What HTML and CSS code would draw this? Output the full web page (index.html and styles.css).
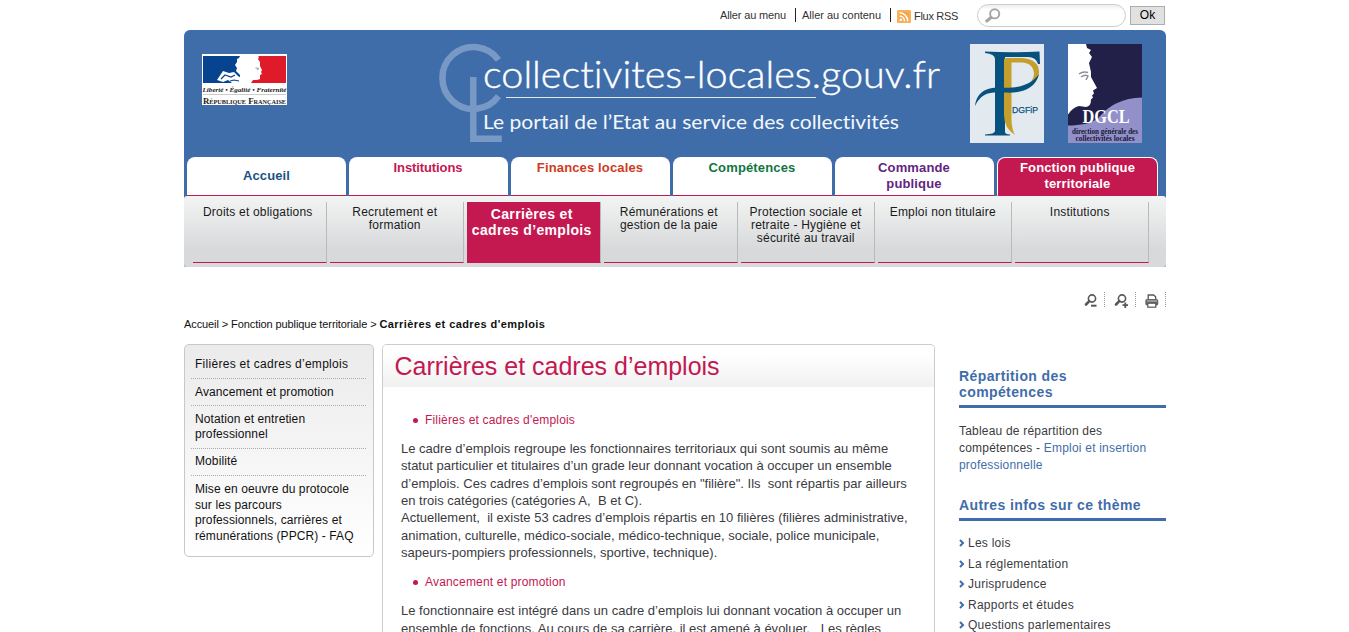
FILE: index.html
```html
<!DOCTYPE html>
<html lang="fr">
<head>
<meta charset="utf-8">
<title>Carrières et cadres d’emplois</title>
<link rel="stylesheet" href="styles.css">
</head>
<body>
<div class="page">
  <div class="topbar">
    <a class="skip">Aller au menu</a>
    <a class="skip second">Aller au contenu</a>
    <a class="rss"><svg width="14" height="13" viewBox="0 0 14 13"><rect width="14" height="13" rx="1.5" fill="#f6a545"/><rect x="1" y="1" width="12" height="11" rx="1" fill="none" stroke="#fac783" stroke-width=".7"/><circle cx="3.8" cy="9.8" r="1.3" fill="#fff"/><path d="M2.5 6a5.2 5.2 0 0 1 5 5.2M2.5 2.8a8.3 8.3 0 0 1 8.2 8.4" fill="none" stroke="#fff" stroke-width="1.6"/></svg><span>Flux RSS</span></a>
    <div class="search"><svg width="16" height="16" viewBox="0 0 16 16"><circle cx="9.700" cy="5.800" r="4.600" fill="none" stroke="#a5a5a5" stroke-width="1.900"/><path d="M6 9.500l-4.200 3.500" stroke="#a5a5a5" stroke-width="3" stroke-linecap="round"/></svg></div>
    <button class="ok">Ok</button>
  </div>

  <header class="header">
    <svg class="banner" width="982" height="127" viewBox="0 0 982 127">
      <g>
        <rect x="18" y="24" width="85" height="51" fill="#fff"/>
        <path d="M19 26h37l-1 2-2 1 0 3-2 3 2 3-1 3 4 4 0 4-3 4H19z" fill="#07448f"/>
        <path d="M74 26h28v27H67l2-3 4 0 3-1 0-4 2-1-1-2 1-2-2-4 0-4-2-3 1-2z" fill="#e01b29"/>
        <path d="M33 50l6-9 6 2 5-1 4 4 5 3 2 4H48l-4-3-5 2z" fill="#fff"/>
        <path d="M37 49l4-4 6 2 4-2M46 51l4-1 5 1" stroke="#07448f" stroke-width="1.200" fill="none"/>
        <path d="M71.500 38l3 .3-1.200 2" stroke="#8d959b" stroke-width="1" fill="none"/>
        <text x="18.500" y="62" textLength="84" lengthAdjust="spacingAndGlyphs" class="devise">Liberté • Égalité • Fraternité</text>
        <path d="M19 64.500h83" stroke="#999" stroke-width=".5"/>
        <text x="19" y="73.500" textLength="83" lengthAdjust="spacingAndGlyphs" class="republique">République Française</text>
      </g>
      <g fill="none" stroke="#7899c5" stroke-width="6.500">
        <path d="M314.500 29.800A31 31 0 1 0 314.500 66.200"/>
        <path d="M289.300 47v61.800h28.500"/>
      </g>
      <text x="299" y="58" textLength="457" lengthAdjust="spacingAndGlyphs" class="site">collectivites-locales.gouv.fr</text>
      <path d="M322 67.500h310" stroke="#dfe8f2"/>
      <text x="299" y="99" textLength="416" lengthAdjust="spacingAndGlyphs" class="tagline">Le portail de l’Etat au service des collectivités</text>
      <g>
        <rect x="786" y="14" width="74" height="99" fill="#e2eaf0"/>
        <path d="M801 21.500Q828 23 855.500 21.500L856 34h-2Q852 27 844 27H821v75q0 2 5 2.500v1h-25v-1q10-.5 10-3.500V29q0-5-10-6z" fill="#07517f"/>
        <path d="M820 30q0-2 3-2h15c12 1 17 6 17 14 0 9-8 15-19 18 9-5 14-10 14-17-1-8-6-10.500-14-10.500h-8.500V85q-.5 13 3.500 20-11-7-11-20z" fill="#c59e2b"/>
        <path d="M791 76C793 62 802 57.500 815 57.500 833 58.500 846 56 855 44 851 60 836 63.500 820 62.500 804 61.500 797 64 791 76z" fill="#07517f"/>
        <text x="828" y="83" textLength="26" lengthAdjust="spacingAndGlyphs" class="dgfip">DGFiP</text>
      </g>
      <g>
        <rect x="884" y="14" width="74" height="99" fill="#221f49"/>
        <path d="M884 95.500c13 0 22-2 30-7 5-6 10-11 18-15q12-6 26-6v45.500h-74z" fill="#9190c8"/>
        <path d="M884 14h18l1 4 4 2-2 3 3 4-3 6 2 9 0 5 6 11-4 2.500 1 3-2 2 1 2-2 2q0 7-5 7.500l-7-1q-6 1-11 8.500z" fill="#fff"/>
        <path d="M895 44q4-3 9-1.500M897 47q4-3 7-1l-2 4" fill="none" stroke="#8d8f9c" stroke-width="1.500"/>
        <text x="898.500" y="92.500" textLength="47" lengthAdjust="spacingAndGlyphs" class="dgcl">DGCL</text>
        <text x="888" y="104" textLength="66" lengthAdjust="spacingAndGlyphs" class="direction">direction générale des</text>
        <text x="891.500" y="110.800" textLength="59" lengthAdjust="spacingAndGlyphs" class="direction">collectivités locales</text>
      </g>
    </svg>
    <nav class="tabs">
      <a class="tab home">Accueil</a>
      <a class="tab inst">Institutions</a>
      <a class="tab fin">Finances locales</a>
      <a class="tab comp">Compétences</a>
      <a class="tab cmd">Commande<br>publique</a>
      <a class="tab active">Fonction publique<br>territoriale</a>
    </nav>
    <nav class="subnav">
      <a class="sub">Droits et obligations</a>
      <a class="sub">Recrutement et<br>formation</a>
      <a class="sub current">Carrières et<br>cadres d’emplois</a>
      <a class="sub">Rémunérations et<br>gestion de la paie</a>
      <a class="sub">Protection sociale et<br>retraite - Hygiène et<br>sécurité au travail</a>
      <a class="sub">Emploi non titulaire</a>
      <a class="sub">Institutions</a>
    </nav>
  </header>

  <div class="tools">
    <span class="tool minus"><svg width="14" height="14" viewBox="0 0 14 14"><circle cx="8" cy="4.500" r="3.600" fill="none" stroke="#55585b" stroke-width="1.600"/><path d="M5.300 7.200L2 10.500" stroke="#55585b" stroke-width="2.600" stroke-linecap="round"/><path d="M7 11.700h5.500" stroke="#55585b" stroke-width="2"/></svg></span>
    <span class="tool plus"><svg width="15" height="14" viewBox="0 0 15 14"><circle cx="8" cy="4.500" r="3.600" fill="none" stroke="#55585b" stroke-width="1.600"/><path d="M5.300 7.200L2 10.500" stroke="#55585b" stroke-width="2.600" stroke-linecap="round"/><path d="M8.500 11.200h5.500M11.300 8.500v5.500" stroke="#55585b" stroke-width="1.800"/></svg></span>
    <span class="tool print"><svg width="14" height="14" viewBox="0 0 14 14"><path d="M3.200 5V1h5.500l2 2v2" fill="#fff" stroke="#55585b" stroke-width="1.300"/><rect x=".3" y="5" width="13" height="6.500" rx="1.800" fill="#66696c"/><path d="M2 7h10" stroke="#c4c4c4"/><rect x="2.800" y="9.200" width="8" height="4" fill="#fff" stroke="#55585b" stroke-width="1.200"/></svg></span>
  </div>

  <div class="crumbs">Accueil &gt; Fonction publique territoriale &gt; <b>Carrières et cadres d'emplois</b></div>

  <div class="columns">
    <ul class="side">
      <li class="first">Filières et cadres d’emplois</li>
      <li>Avancement et promotion</li>
      <li>Notation et entretien<br>professionnel</li>
      <li>Mobilité</li>
      <li>Mise en oeuvre du protocole<br>sur les parcours<br>professionnels, carrières et<br>rémunérations (PPCR) - FAQ</li>
    </ul>
    <main class="main">
      <h1>Carrières et cadres d’emplois</h1>
      <div class="article">
        <h2>Filières et cadres d'emplois</h2>
        <p>Le cadre d’emplois regroupe les fonctionnaires territoriaux qui sont soumis au même<br>statut particulier et titulaires d’un grade leur donnant vocation à occuper un ensemble<br>d’emplois. Ces cadres d’emplois sont regroupés en "filière". Ils&nbsp; sont répartis par ailleurs<br>en trois catégories (catégories A,&nbsp; B et C).<br>Actuellement,&nbsp; il existe 53 cadres d’emplois répartis en 10 filières (filières administrative,<br>animation, culturelle, médico-sociale, médico-technique, sociale, police municipale,<br>sapeurs-pompiers professionnels, sportive, technique).</p>
        <h2>Avancement et promotion</h2>
        <p>Le fonctionnaire est intégré dans un cadre d’emplois lui donnant vocation à occuper un<br>ensemble de fonctions. Au cours de sa carrière, il est amené à évoluer.&nbsp; &nbsp;Les règles</p>
      </div>
    </main>
    <aside class="aside">
      <h3>Répartition des<br>compétences</h3>
      <p>Tableau de répartition des<br>compétences - <a>Emploi et insertion<br>professionnelle</a></p>
      <h3>Autres infos sur ce thème</h3>
      <ul class="links">
        <li><svg width="6" height="8" viewBox="0 0 6 8"><path d="M1 1l3 3-3 3"/></svg>Les lois</li>
        <li><svg width="6" height="8" viewBox="0 0 6 8"><path d="M1 1l3 3-3 3"/></svg>La réglementation</li>
        <li><svg width="6" height="8" viewBox="0 0 6 8"><path d="M1 1l3 3-3 3"/></svg>Jurisprudence</li>
        <li><svg width="6" height="8" viewBox="0 0 6 8"><path d="M1 1l3 3-3 3"/></svg>Rapports et études</li>
        <li><svg width="6" height="8" viewBox="0 0 6 8"><path d="M1 1l3 3-3 3"/></svg>Questions parlementaires</li>
      </ul>
    </aside>
  </div>
</div>
</body>
</html>
```
FILE: styles.css
```css
* { box-sizing: border-box; }
html { height: 100%; overflow: hidden; }
body { margin: 0; height: 632px; overflow: hidden; background: #fff; font-family: "Liberation Sans", Arial, sans-serif; font-size: 12px; color: #222; }
.page { width: 982px; margin-left: 184px; }
ul { list-style: none; margin: 0; padding: 0; }
svg { display: block; flex: none; }

.topbar { height: 30px; display: flex; justify-content: flex-end; align-items: flex-start; padding-right: 1px; font-size: 11px; letter-spacing: -.15px; color: #333; white-space: nowrap; }
.skip { margin-top: 8px; height: 14px; line-height: 14px; width: 76px; border-right: 1px solid #222; }
.skip.second { margin-left: 6px; width: 89px; letter-spacing: -.03px; }
.rss { display: flex; align-items: center; gap: 3px; margin: 9px 0 0 6px; width: 80px; height: 14px; letter-spacing: -.3px; }
.search { width: 149px; height: 23px; margin-top: 4px; border: 1px solid #ccc; border-radius: 12px; padding: 3px 7px; background: linear-gradient(#eee, #fff 25%); }
.ok { width: 35px; height: 19px; margin: 6px 0 0 4px; padding: 0; border: 1px solid #adadad; background: #e1e1e1; font: 12px/15px "Liberation Sans", Arial, sans-serif; color: #000; }

.header { height: 237px; background: #3f6daa; border-radius: 6px 6px 2px 2px; }
.devise { font: italic bold 7px "Liberation Serif", serif; fill: #222; }
.republique { font: bold 8.500px "Liberation Serif", serif; font-variant: small-caps; fill: #222; }
.site { font: 300 38px Lato, sans-serif; font-variant-ligatures: none; fill: #fff; stroke: #fff; stroke-width: .4px; }
.tagline { font: 400 20px Lato, sans-serif; font-variant-ligatures: none; fill: #f3f7fb; }
.dgfip { font: 9.500px "Liberation Sans", sans-serif; fill: #07517f; stroke: #07517f; stroke-width: .25px; }
.dgcl { font: bold 19px "Liberation Serif", serif; fill: #fff; }
.direction { font: bold 7.500px "Liberation Serif", serif; fill: #1a1838; }

.tabs { display: flex; gap: 3px; padding-left: 3px; height: 39px; }
.tab { width: 159px; height: 39px; background: #fff; border-bottom: 1px solid #c31850; border-radius: 8px 8px 0 0; text-align: center; padding-top: 3px; font: bold 13px/16px "Liberation Sans", Arial, sans-serif; letter-spacing: .14px; }
.home { color: #1b5284; padding-top: 11px; }
.inst { color: #c31850; letter-spacing: -.1px; padding-right: 1px; }
.fin { color: #d03a22; padding-right: 1px; }
.comp { color: #11753f; padding-right: 1px; }
.cmd { color: #632481; padding-right: 1px; }
.active { width: 161px; color: #fff; background: #c31850; border: 1px solid #fff; border-bottom-color: #c31850; padding-top: 2px; }

.subnav { height: 71px; display: flex; gap: 3px; padding: 6px 0 4px 9px; background: linear-gradient(#f3f5f4, #d8d9db 75%); border-radius: 3px; }
.sub { width: 134px; height: 61px; border-right: 1px solid #b9babc; border-bottom: 1px solid #c31850; text-align: center; padding: 4px 3.500px 0 0; line-height: 13px; color: #1a1a1a; letter-spacing: .2px; white-space: nowrap; }
.sub.current { background: #c31850; color: #fff; font: bold 14px/16px "Liberation Sans", Arial, sans-serif; letter-spacing: .35px; }

.tools { height: 31px; margin-top: 10px; display: flex; justify-content: flex-end; align-items: flex-end; }
.tool { height: 15px; display: flex; align-items: flex-start; border-right: 1px dotted #999; width: 31px; }
.tools { padding-bottom: 1px; }
.tool svg { margin-top: 2px; }
.minus { padding-left: 10px; }
.plus { padding-left: 9px; }
.print { width: 30px; padding-left: 9px; }
.crumbs { height: 16px; line-height: 16px; font-size: 11px; color: #111; margin-top: 8px; white-space: nowrap; letter-spacing: -.09px; }
.crumbs b { letter-spacing: .42px; }

.columns { display: flex; align-items: flex-start; margin-top: 12px; }
.side { width: 190px; height: 213px; border: 1px solid #c8c8c8; border-radius: 5px; background: linear-gradient(#ebebeb, #fff); padding: 6px; font-size: 12px; color: #111; letter-spacing: .1px; white-space: nowrap; }
.side li { line-height: 15.500px; padding: 5.300px 4px 5.200px; border-bottom: 1px dotted #aaa; width: 175px; }
.side .first { padding: 5.500px 4px 6px; letter-spacing: .28px; }
.side li:nth-child(2) { padding-top: 5.600px; padding-bottom: 5px; }
.side li:nth-child(3) { padding-top: 5.600px; padding-bottom: 5.200px; }
.side li:last-child { border: 0; padding-top: 6.300px; }

.main { width: 553px; height: 300px; margin-left: 8px; border: 1px solid #ccc; border-bottom: 0; border-radius: 5px 5px 0 0; overflow: hidden; }
h1 { margin: 0; height: 42px; padding-left: 11.500px; font-weight: 400; font-size: 25px; line-height: 43px; color: #c31850; background: linear-gradient(#fff 20%, #f1f1f1); white-space: nowrap; }
.article { padding: 25px 0 0 18px; font-size: 13px; color: #3b3b3f; white-space: nowrap; }
.article p { margin: 0 0 13px; line-height: 17.350px; letter-spacing: .01px; }
.article h2 { margin: 0 0 11px; padding-left: 12px; height: 17px; display: flex; align-items: center; font-size: 12px; font-weight: 400; line-height: 17px; letter-spacing: .18px; color: #c31850; }
.article h2::before { content: ""; width: 5px; height: 5px; border-radius: 50%; background: #c31850; margin: -1px 7px 0 0; }

.aside { width: 207px; margin-left: 24px; padding-top: 24px; color: #3b3b3f; white-space: nowrap; }
h3 { margin: 0; padding-bottom: 5px; border-bottom: 3px solid #3f6daa; color: #3f6daa; font-size: 14px; line-height: 16px; letter-spacing: .4px; }
.aside p { margin: 15px 0 23px; line-height: 17px; letter-spacing: .2px; }
.aside p a { color: #3f6daa; }
.links { margin-top: 12px; }
.links li { display: flex; align-items: center; gap: 3px; height: 20.500px; letter-spacing: .25px; }
.links svg { fill: none; stroke: #3f6daa; stroke-width: 2px; }
```
